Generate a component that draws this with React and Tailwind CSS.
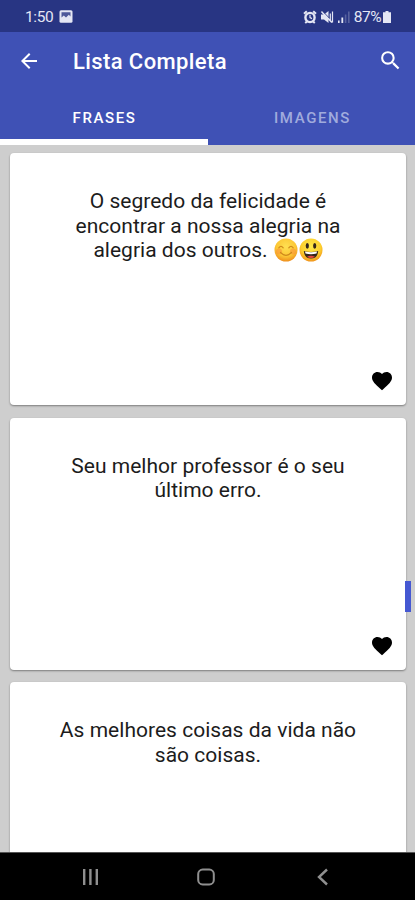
import React from "react";
import { MdArrowBack, MdFavorite, MdSearch } from "react-icons/md";

const BlushEmoji = () => (
  <svg viewBox="0 0 24 24" className="w-6 h-6" role="img" aria-label="😊">
    <defs>
      <radialGradient id="blushFace" cx="50%" cy="35%" r="65%">
        <stop offset="0%" stopColor="#ffe052" />
        <stop offset="65%" stopColor="#fcc735" />
        <stop offset="100%" stopColor="#ee8f1d" />
      </radialGradient>
    </defs>
    <circle cx="12" cy="12" r="11.5" fill="url(#blushFace)" />
    <circle cx="5" cy="13.5" r="3" fill="#f98a3c" opacity="0.5" />
    <circle cx="19" cy="13.5" r="3" fill="#f98a3c" opacity="0.5" />
    <g fill="none" stroke="#cf8a1c" strokeWidth="1.2" strokeLinecap="round">
      <path d="M4.8 9.8Q7 6.8 9.2 9.8" />
      <path d="M14.8 9.8Q17 6.8 19.2 9.8" />
      <path d="M6.5 14.5Q12 20 17.5 14.5" />
    </g>
  </svg>
);

const GrinEmoji = () => (
  <svg viewBox="0 0 24 24" className="w-6 h-6" role="img" aria-label="😃">
    <defs>
      <radialGradient id="grinFace" cx="50%" cy="35%" r="65%">
        <stop offset="0%" stopColor="#ffe94a" />
        <stop offset="65%" stopColor="#fdcf2d" />
        <stop offset="100%" stopColor="#f0941c" />
      </radialGradient>
    </defs>
    <circle cx="12" cy="12" r="11.5" fill="url(#grinFace)" />
    <ellipse cx="8.3" cy="7.8" rx="1.6" ry="2.9" fill="#35251a" />
    <ellipse cx="15.7" cy="7.8" rx="1.6" ry="2.9" fill="#35251a" />
    <path d="M4.8 13Q12 15 19.2 13Q18.5 20.5 12 20.5Q5.5 20.5 4.8 13Z" fill="#35251a" />
    <path d="M6 13.6Q12 15 18 13.6L17.5 15.6Q12 16.8 6.5 15.6Z" fill="#ffffff" />
    <path d="M8 18.8Q12 16.6 16 18.8Q12 21.4 8 18.8Z" fill="#e8453c" />
  </svg>
);

const quotes = [
  {
    id: 1,
    lines: ["O segredo da felicidade é", "encontrar a nossa alegria na", "alegria dos outros."],
    emojis: true,
  },
  { id: 2, lines: ["Seu melhor professor é o seu", "último erro."] },
  { id: 3, lines: ["As melhores coisas da vida não", "são coisas."] },
];

const StatusBar = () => (
  <div className="h-8 shrink-0 bg-[#283583] flex items-center justify-between pl-[25px] pr-[24px] pt-[2px] text-[#e4e6f4]">
    <div className="flex items-center">
      <span className="text-[15.5px] leading-4 w-[34px] tracking-[-0.4px]">1:50</span>
      <svg viewBox="0 0 14 13" className="w-[14px] h-[13px] mt-[-2px]">
        <rect x="0.5" y="0.3" width="13" height="12.4" rx="1.5" fill="currentColor" />
        <path d="M2.5 9V7.6L4.8 5.6L7 7.5L9.8 4.7L11.5 6.5V2.2H2.5Z" fill="#283583" opacity="0.8" />
      </svg>
    </div>
    <div className="flex items-center">
      <svg viewBox="0 0 14 14" className="w-[14px] h-[14px] mr-[3px]" fill="none" stroke="currentColor">
        <circle cx="7" cy="7.5" r="4.6" strokeWidth="2.4" />
        <path d="M1 3.8L3.8 1.2M13 3.8L10.2 1.2M2.2 13L4 11.4M11.8 13L10 11.4" strokeWidth="2" />
        <path d="M7 4.8V7.6L9 8.6" strokeWidth="1.2" />
      </svg>
      <svg viewBox="0 0 14 14" className="w-[14px] h-[14px] mr-[4px]" fill="none" stroke="currentColor">
        <path d="M1 4.5H4L8.5 1V13L4 9.5H1Z" fill="currentColor" stroke="none" />
        <path d="M1.5 1.5L12 12.5" strokeWidth="1.8" />
        <path d="M12.5 1.5V12.5M10.3 3.5V10" strokeWidth="1.2" />
        <path d="M2.8 1.3L9.5 8.3" stroke="#283583" strokeWidth="0.8" />
      </svg>
      <svg viewBox="0 0 12 12" className="w-3 h-3 mr-[4px]" fill="currentColor">
        <rect x="0" y="9.5" width="1.6" height="2.5" />
        <rect x="3.4" y="6.5" width="1.8" height="5.5" />
        <rect x="6.8" y="3.5" width="1.6" height="8.5" opacity="0.25" />
        <rect x="10" y="0.5" width="1.6" height="11.5" opacity="0.25" />
      </svg>
      <span className="text-[15.5px] leading-4 tracking-[-0.5px]">87%</span>
      <svg viewBox="0 0 8 12" className="w-2 h-3 ml-[2px]" fill="currentColor">
        <path d="M2.5 0h3v1.3H8V12H0V1.3h2.5Z" />
      </svg>
    </div>
  </div>
);

const AppBar = () => (
  <div className="shrink-0 h-[113px] bg-[#3f51b5] flex flex-col text-white">
    <div className="h-[58px] flex items-center pl-[17px] pr-[12px]">
      <MdArrowBack className="w-[24px] h-[24px]" />
      <h1 className="ml-[32px] pt-[2px] flex-1 text-[22px] leading-7 font-medium tracking-[0.4px]">
        Lista Completa
      </h1>
      <MdSearch className="w-[25px] h-[25px] mt-[-1px]" />
    </div>
    <div className="flex-1 flex text-[15px] font-medium tracking-[1.6px]">
      <div className="w-[208px] flex items-center justify-center border-b-[6px] border-white pt-[7px] pl-px">
        FRASES
      </div>
      <div className="flex-1 flex items-center justify-center pt-px pl-[2px] text-[#a0abdd]">
        IMAGENS
      </div>
    </div>
  </div>
);

const QuoteCard = ({ quote }) => (
  <div className="shrink-0 h-[252px] bg-white rounded-[4px] shadow-[0_1px_2px_rgba(0,0,0,0.4)] flex flex-col justify-between px-5 pt-[36px] pb-[12px]">
    <p className="text-[21px] leading-[24.6px] text-center text-[#1c1c1c] tracking-[0.02px]">
      {quote.lines.map((line, i) => (
        <span key={line} className="flex justify-center whitespace-nowrap">
          {line}
          {quote.emojis && i === quote.lines.length - 1 && (
            <span className="flex items-center gap-px ml-[6px] mt-[-1px]">
              <BlushEmoji />
              <GrinEmoji />
            </span>
          )}
        </span>
      ))}
    </p>
    <MdFavorite className="self-end w-[24px] h-[24px] mr-[-8px] text-black" />
  </div>
);

const NavBar = () => (
  <div className="h-12 shrink-0 bg-black border-t border-[#555555] flex justify-between items-center pl-[82px] pr-[85px]">
    <svg viewBox="0 0 18 18" className="w-[18px] h-[18px]" fill="#8f8f8f">
      <rect x="1" y="1" width="2.4" height="16" />
      <rect x="7.2" y="1" width="2.4" height="16" />
      <rect x="13.6" y="1" width="2.4" height="16" />
    </svg>
    <svg viewBox="0 0 18 18" className="w-[18px] h-[18px] mr-[4px]" fill="none" stroke="#8f8f8f" strokeWidth="2">
      <rect x="1.2" y="1.6" width="15.6" height="14.8" rx="4.5" />
    </svg>
    <svg viewBox="0 0 14 18" className="w-[14px] h-[18px]" fill="none" stroke="#8f8f8f" strokeWidth="2.4">
      <path d="M11 1.5L3 9L11 16.5" />
    </svg>
  </div>
);

const App = () => {
  return (
    <div className="w-[415px] h-[900px] flex flex-col overflow-hidden bg-[#cecece] font-['Roboto',sans-serif]">
      <StatusBar />
      <AppBar />
      <div className="relative flex-1 min-h-0 overflow-hidden flex flex-col gap-[12.7px] pl-[10px] pr-[9px] pt-[8px]">
        {quotes.map((quote) => (
          <QuoteCard key={quote.id} quote={quote} />
        ))}
        <div className="absolute right-[4px] top-[436px] w-[6px] h-[31px] bg-[#4558d2]" />
      </div>
      <NavBar />
    </div>
  );
};

export default App;
